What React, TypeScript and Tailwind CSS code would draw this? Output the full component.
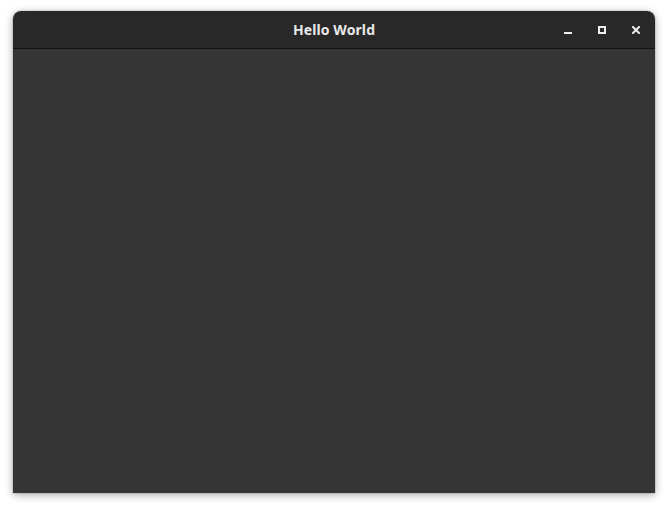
export default function App() {
  return (
    <div className="w-[668px] h-[509px] bg-white pt-[11px] pl-[13px]">
      <div className="w-[642px] h-[482px] flex flex-col rounded-t-[8px] overflow-hidden shadow-[0_2px_8px_rgba(0,0,0,0.35),0_0_0_1px_rgba(0,0,0,0.08)]">
        {/* Header bar */}
        <div className="relative h-[38px] shrink-0 bg-[#282828] border-b border-[#111111] flex items-center justify-center">
          <span className="text-[14px] font-bold text-[#e8e8e8] font-['Noto_Sans',sans-serif] tracking-[0.1px]">
            Hello World
          </span>
          <div className="absolute right-[15px] top-[15px] flex items-center gap-[26px]">
            <svg width="8" height="8" viewBox="0 0 8 8">
              <rect x="0" y="6" width="8" height="2" fill="#ececec" />
            </svg>
            <svg width="8" height="8" viewBox="0 0 8 8">
              <rect x="1" y="1" width="6" height="6" fill="none" stroke="#ececec" strokeWidth="2" />
            </svg>
            <svg width="8" height="8" viewBox="0 0 8 8">
              <path d="M1 1L7 7M7 1L1 7" stroke="#ececec" strokeWidth="2" strokeLinecap="square" />
            </svg>
          </div>
        </div>
        {/* Content */}
        <div className="flex-1 bg-[#353535]" />
      </div>
    </div>
  );
}
